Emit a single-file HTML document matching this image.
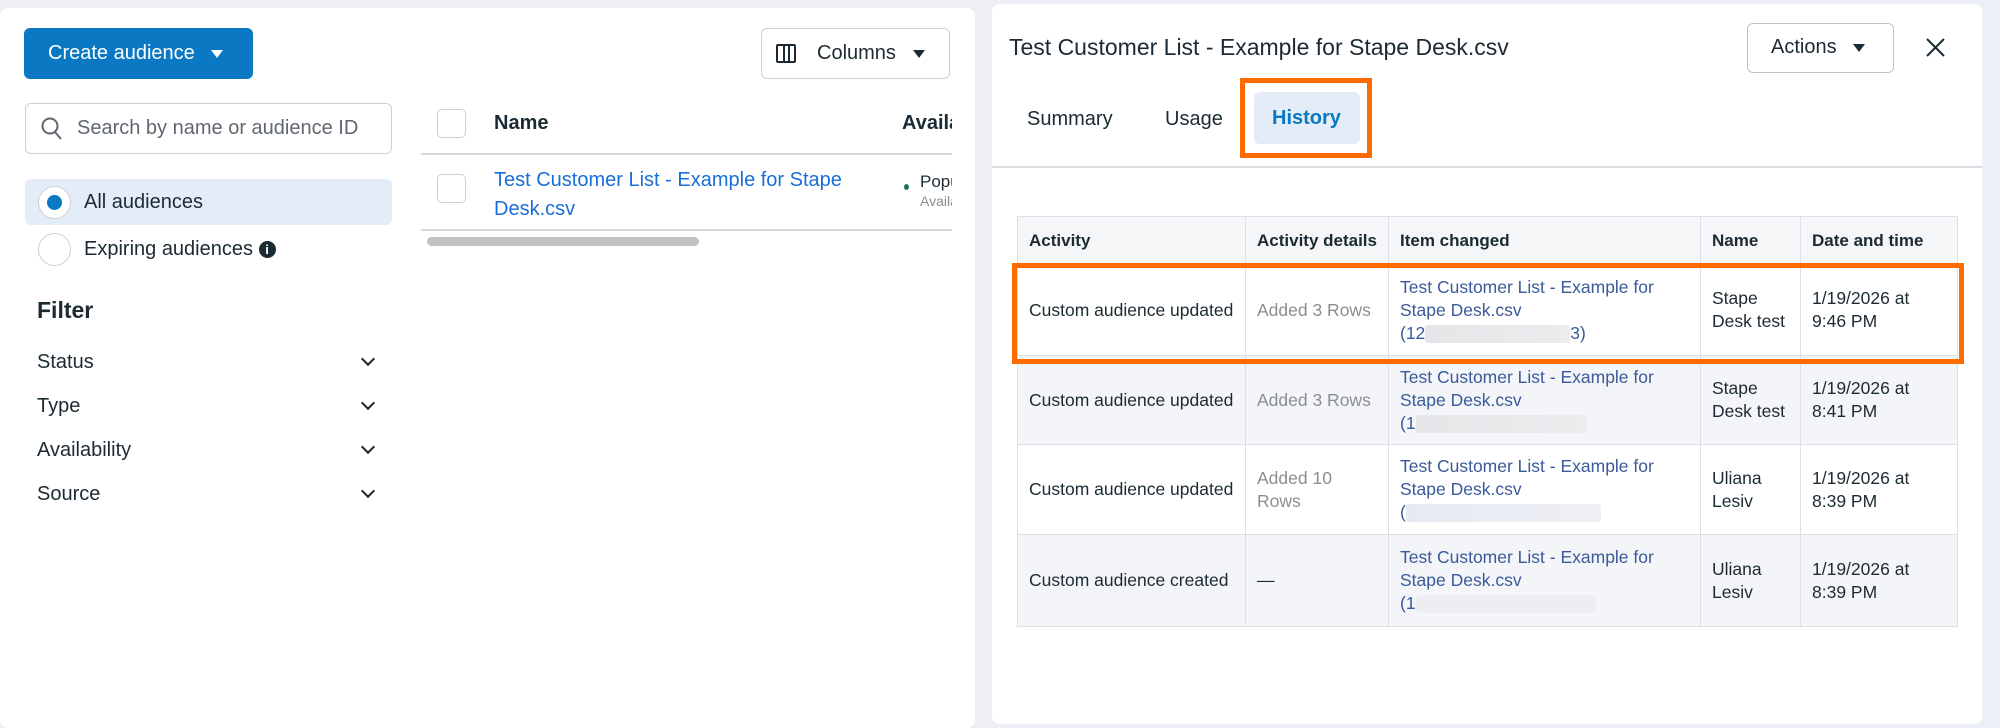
<!DOCTYPE html>
<html><head><meta charset="utf-8"><style>
*{box-sizing:border-box;margin:0;padding:0}
body{width:2000px;height:716px;overflow:hidden;background:linear-gradient(90deg,#f1eef3,#eceff7);font-family:"Liberation Sans",sans-serif;color:#1c2b33;position:relative}
.a{position:absolute}
.panel{background:#fff;border-radius:8px}
.t{position:absolute;white-space:nowrap}
.chev{position:absolute;width:10px;height:10px;border-right:2.5px solid #1c2b33;border-bottom:2.5px solid #1c2b33;transform:rotate(45deg)}
.tri{display:inline-block;width:0;height:0;border-left:7px solid transparent;border-right:7px solid transparent;border-top:8px solid currentColor;vertical-align:middle}
table{border-collapse:collapse;position:absolute;left:1017px;top:216px;width:941px;font-size:17.5px;line-height:23px}
td,th{border:1.5px solid #dcdfe3;text-align:left;vertical-align:middle;padding:0 11px}
th{height:48px;background:#f5f6f7;font-weight:bold;font-size:17px}
tr.g td{background:#f3f5f8}
.lk{color:#3b5a9a}
.gr{color:#8a8d91}
.blur{display:inline-block;height:18px;vertical-align:middle;background:linear-gradient(90deg,#e6e6e9,#ececef);border-radius:3px}
</style></head><body>
<div class="a panel" style="left:0;top:8px;width:975px;height:720px"></div>
<div class="a" style="left:24px;top:28px;width:229px;height:51px;background:#0a78c2;border-radius:6px;color:#fff;font-size:20px;line-height:51px;padding-left:24px">Create audience&nbsp;&nbsp;&nbsp;<span class="tri" style="border-left-width:6px;border-right-width:6px"></span></div>
<div class="a" style="left:761px;top:28px;width:189px;height:51px;border:1.5px solid #ccd0d5;border-radius:6px;font-size:20px;line-height:48px;padding-left:55px">Columns&nbsp;&nbsp;&nbsp;<span class="tri" style="border-left-width:6px;border-right-width:6px"></span>
<div class="a" style="left:14px;top:15px;width:20px;height:19px;border:2px solid #1c2b33;border-radius:2px"></div><div class="a" style="left:21px;top:15px;width:7px;height:19px;border-left:2px solid #1c2b33;border-right:2px solid #1c2b33"></div></div>
<div class="a" style="left:25px;top:103px;width:367px;height:51px;border:1.5px solid #ccd0d5;border-radius:6px"></div>
<svg class="a" style="left:41px;top:117px" width="22" height="24"><circle cx="9" cy="9" r="7.5" fill="none" stroke="#606770" stroke-width="2"/><line x1="14" y1="15" x2="20" y2="22" stroke="#606770" stroke-width="2"/></svg>
<div class="t" style="left:77px;top:117px;font-size:20px;color:#606770">Search by name or audience ID</div>
<div class="a" style="left:25px;top:179px;width:367px;height:46px;background:#e4edf7;border-radius:6px"></div>
<div class="a" style="left:38px;top:186px;width:33px;height:33px;border-radius:50%;border:1.5px solid #ccd0d5;background:#fff"></div>
<div class="a" style="left:47px;top:195px;width:15px;height:15px;border-radius:50%;background:#0a78c2"></div>
<div class="t" style="left:84px;top:191px;font-size:20px">All audiences</div>
<div class="a" style="left:38px;top:233px;width:33px;height:33px;border-radius:50%;border:1.5px solid #ccd0d5;background:#fff"></div>
<div class="t" style="left:84px;top:238px;font-size:20px">Expiring audiences <span style="display:inline-block;width:17px;height:17px;border-radius:50%;background:#1c2b33;color:#fff;font-size:13px;line-height:17px;text-align:center;font-weight:bold;vertical-align:1px">i</span></div>
<div class="t" style="left:37px;top:297px;font-size:23px;font-weight:bold">Filter</div>
<div class="t" style="left:37px;top:351px;font-size:20px">Status</div><div class="chev" style="left:363px;top:354px"></div>
<div class="t" style="left:37px;top:395px;font-size:20px">Type</div><div class="chev" style="left:363px;top:398px"></div>
<div class="t" style="left:37px;top:439px;font-size:20px">Availability</div><div class="chev" style="left:363px;top:442px"></div>
<div class="t" style="left:37px;top:483px;font-size:20px">Source</div><div class="chev" style="left:363px;top:486px"></div>
<div class="a" style="left:437px;top:109px;width:29px;height:29px;border:1.5px solid #ccd0d5;border-radius:5px"></div>
<div class="t" style="left:494px;top:112px;font-size:20px;font-weight:bold">Name</div>
<div class="a" style="left:900px;top:109px;width:52px;height:30px;overflow:hidden"><div class="t" style="left:2px;top:3px;font-size:20px;font-weight:bold">Availability</div></div>
<div class="a" style="left:421px;top:153px;width:531px;height:1.5px;background:#d5d8dc"></div>
<div class="a" style="left:437px;top:174px;width:29px;height:29px;border:1.5px solid #ccd0d5;border-radius:5px"></div>
<div class="t" style="left:494px;top:166px;font-size:20px;line-height:29px;color:#1a6ed8">Test Customer List - Example for Stape<br>Desk.csv</div>
<div class="a" style="left:904px;top:184px;width:5px;height:6px;border-radius:50%;background:#1a7b50"></div>
<div class="a" style="left:920px;top:172px;width:32px;height:40px;overflow:hidden"><div class="t" style="top:0;font-size:17px">Populated</div><div class="t" style="top:21px;font-size:14px;color:#8a8d91">Available</div></div>
<div class="a" style="left:421px;top:229px;width:531px;height:1.5px;background:#d5d8dc"></div>
<div class="a" style="left:427px;top:237px;width:272px;height:9px;border-radius:5px;background:#c2c2c2"></div>

<div class="a panel" style="left:992px;top:4px;width:990px;height:720px"></div>
<div class="t" style="left:1009px;top:34px;font-size:23px">Test Customer List - Example for Stape Desk.csv</div>
<div class="a" style="left:1747px;top:23px;width:147px;height:50px;border:1.5px solid #bec3c9;border-radius:6px;font-size:20px;line-height:47px;padding-left:23px">Actions&nbsp;&nbsp;&nbsp;<span class="tri" style="border-left-width:6px;border-right-width:6px"></span></div>
<svg class="a" style="left:1926px;top:38px" width="19" height="19"><path d="M1 1L18 18M18 1L1 18" stroke="#1c2b33" stroke-width="2"/></svg>
<div class="t" style="left:1027px;top:108px;font-size:20px">Summary</div>
<div class="t" style="left:1165px;top:108px;font-size:20px">Usage</div>
<div class="a" style="left:1254px;top:92px;width:106px;height:52px;background:#e4edf7;border-radius:6px"></div>
<div class="t" style="left:1272px;top:107px;font-size:20px;font-weight:bold;color:#0a78c2">History</div>
<div class="a" style="left:1240px;top:78px;width:132px;height:80px;border:5px solid #ff6b00"></div>
<div class="a" style="left:992px;top:166px;width:990px;height:2px;background:#dadde1"></div>

<table>
<tr><th style="width:228px">Activity</th><th style="width:143px">Activity details</th><th style="width:312px">Item changed</th><th style="width:100px">Name</th><th>Date and time</th></tr>
<tr style="height:91px"><td>Custom audience updated</td><td class="gr">Added 3 Rows</td><td class="lk">Test Customer List - Example for<br>Stape Desk.csv<br>(12<span class="blur" style="width:145px"></span>3)</td><td>Stape<br>Desk test</td><td>1/19/2026 at<br>9:46 PM</td></tr>
<tr class="g" style="height:89px"><td>Custom audience updated</td><td class="gr">Added 3 Rows</td><td class="lk">Test Customer List - Example for<br>Stape Desk.csv<br>(1<span class="blur" style="width:170px"></span></td><td>Stape<br>Desk test</td><td>1/19/2026 at<br>8:41 PM</td></tr>
<tr style="height:90px"><td>Custom audience updated</td><td class="gr">Added 10<br>Rows</td><td class="lk">Test Customer List - Example for<br>Stape Desk.csv<br>(<span class="blur" style="width:195px;background:linear-gradient(90deg,#e6e9f1,#eef0f5)"></span></td><td>Uliana<br>Lesiv</td><td>1/19/2026 at<br>8:39 PM</td></tr>
<tr class="g" style="height:92px"><td>Custom audience created</td><td>—</td><td class="lk">Test Customer List - Example for<br>Stape Desk.csv<br>(1<span class="blur" style="width:180px;background:#eceef2"></span></td><td>Uliana<br>Lesiv</td><td>1/19/2026 at<br>8:39 PM</td></tr>
</table>
<div class="a" style="left:1012px;top:263px;width:952px;height:101px;border:5px solid #ff6b00"></div>
</body></html>
